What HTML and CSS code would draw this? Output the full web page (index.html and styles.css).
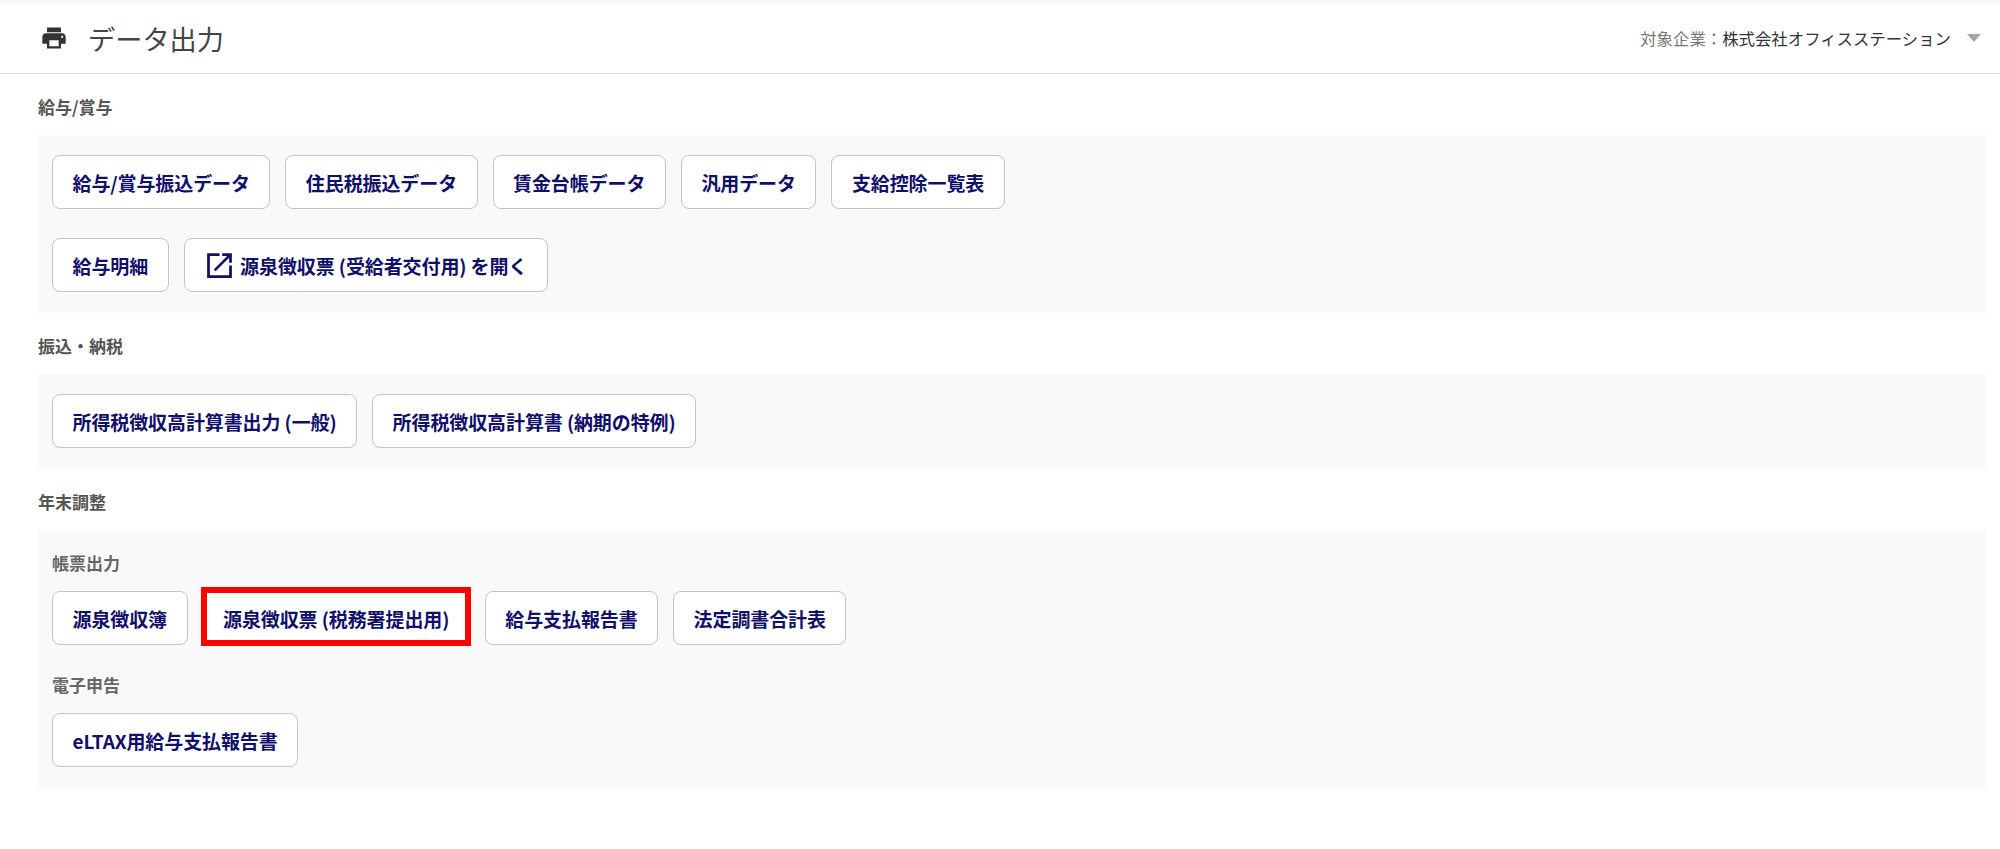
FILE: index.html
```html
<!DOCTYPE html>
<html lang="ja">
<head>
    <meta charset="UTF-8">
    <title>データ出力</title>
    <link rel="stylesheet" href="styles.css">
</head>
<body>
    <header class="page-header">
        <div class="page-title">
            <svg class="print-icon" viewBox="0 0 24 24"><path d="M19 8H5c-1.66 0-3 1.34-3 3v6h4v4h12v-4h4v-6c0-1.66-1.34-3-3-3zm-3 11H8v-5h8v5zm3-7c-.55 0-1-.45-1-1s.45-1 1-1 1 .45 1 1-.45 1-1 1zm-1-9H6v4h12V3z"/></svg>
            <h1>データ出力</h1>
        </div>
        <div class="company">
            <span class="company-label">対象企業：</span><span class="company-name">株式会社オフィスステーション</span>
            <span class="company-arrow"></span>
        </div>
    </header>

    <main class="content">
        <h2 class="section-title">給与/賞与</h2>
        <section class="panel">
            <div class="btn-row">
                <button class="btn">給与/賞与振込データ</button>
                <button class="btn">住民税振込データ</button>
                <button class="btn">賃金台帳データ</button>
                <button class="btn">汎用データ</button>
                <button class="btn">支給控除一覧表</button>
            </div>
            <div class="btn-row">
                <button class="btn">給与明細</button>
                <button class="btn">
                    <svg class="open-icon" viewBox="0 0 24 24"><path d="M19 19H5V5h7V3H3v18h18v-9h-2v7zM14 3v2h3.59l-9.83 9.83 1.41 1.41L19 6.41V10h2V3h-7z"/></svg>
                    <span>源泉徴収票 (受給者交付用) を開く</span>
                </button>
            </div>
        </section>

        <h2 class="section-title">振込・納税</h2>
        <section class="panel">
            <div class="btn-row">
                <button class="btn">所得税徴収高計算書出力 (一般)</button>
                <button class="btn">所得税徴収高計算書 (納期の特例)</button>
            </div>
        </section>

        <h2 class="section-title">年末調整</h2>
        <section class="panel">
            <h3 class="group-title">帳票出力</h3>
            <div class="btn-row">
                <button class="btn">源泉徴収簿</button>
                <button class="btn btn-marked">源泉徴収票 (税務署提出用)</button>
                <button class="btn">給与支払報告書</button>
                <button class="btn">法定調書合計表</button>
            </div>
            <h3 class="group-title">電子申告</h3>
            <div class="btn-row">
                <button class="btn">eLTAX用給与支払報告書</button>
            </div>
        </section>
    </main>
</body>
</html>
```

FILE: styles.css
```css
body {
    margin: 0;
    background: #fff;
    font-family: "Noto Sans CJK JP", "Noto Sans", sans-serif;
    color: #444;
}
.page-header {
    display: flex;
    justify-content: space-between;
    align-items: center;
    height: 74px;
    box-sizing: border-box;
    padding: 2px 19px 0 42px;
    border-bottom: 1px solid #e4e4e4;
    background: linear-gradient(#f3f3f3, #fff 6px);
}
.page-title {
    display: flex;
    align-items: center;
    gap: 20px;
}
.print-icon {
    width: 28px;
    height: 28px;
    margin-left: -2px;
    fill: #333;
}
.page-title h1 {
    margin: 0;
    font-size: 27.2px;
    font-weight: 400;
    color: #444;
}
.company {
    display: flex;
    align-items: center;
    font-size: 16.4px;
}
.company-label {
    color: #777;
}
.company-name {
    color: #333;
}
.company-arrow {
    width: 0;
    height: 0;
    margin: 0 0 0 16px;
    border-left: 7px solid transparent;
    border-right: 7px solid transparent;
    border-top: 8px solid #a5a5a5;
}
.content {
    padding: 0 14px 0 38px;
}
.section-title {
    margin: 0;
    padding: 19px 0 15px;
    font-size: 17px;
    line-height: 27px;
    font-weight: 700;
    color: #555;
}
.panel {
    padding: 20px 14px 21px;
    background: #f9f9f9;
}
.btn-row {
    display: flex;
    gap: 15px;
}
.btn-row + .btn-row {
    margin-top: 29px;
}
.btn-row + .group-title {
    margin-top: 26px;
}
.group-title {
    margin: -1px 0 15px;
    font-size: 17px;
    line-height: 27px;
    font-weight: 700;
    color: #666;
}
.btn {
    position: relative;
    display: flex;
    align-items: center;
    height: 54px;
    padding: 0 19.5px;
    border: 1px solid #c4c4c4;
    border-radius: 8px;
    background: #fff;
    font-family: inherit;
    font-size: 19px;
    font-weight: 700;
    letter-spacing: -0.1px;
    color: #10106a;
    white-space: nowrap;
}
.btn-marked::after {
    content: "";
    position: absolute;
    top: -5px;
    right: -2px;
    bottom: -2px;
    left: -3px;
    border: 6px solid #f00;
}
.open-icon {
    width: 33px;
    height: 33px;
    margin: 0 4px 0 -1px;
    fill: #10106a;
}
```
